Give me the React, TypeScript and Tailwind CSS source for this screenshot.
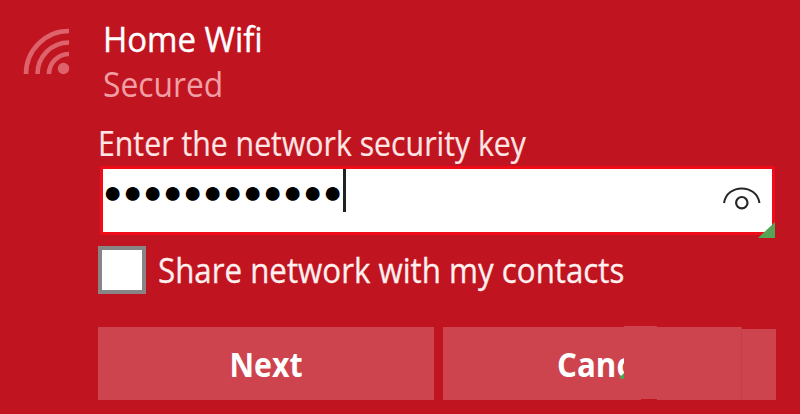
import React from "react";

const WifiIcon = () => (
  <svg width="48" height="50" viewBox="0 0 48 50" fill="none" stroke="#de626b" strokeWidth="4.6">
    <path d="M3 49 A43 43 0 0 1 46 6" />
    <path d="M14.5 49 A31.5 31.5 0 0 1 46 17.5" />
    <path d="M26 49 A20 20 0 0 1 46 29" />
    <circle cx="40.5" cy="43.5" r="5.7" fill="#de626b" stroke="none" />
  </svg>
);

const RevealIcon = () => (
  <svg width="40" height="30" viewBox="0 0 40 30" fill="none" stroke="#262626">
    <path d="M2 19 C5 -0.5 34.5 -0.5 37.5 19" strokeWidth="2" />
    <circle cx="19.8" cy="18.7" r="5.7" strokeWidth="2.2" />
  </svg>
);

const App = () => {
  return (
    <div className="w-[800px] h-[414px] overflow-hidden bg-[#c11421] pl-[98px] pr-6 font-['Open_Sans','Noto_Sans',sans-serif] text-white whitespace-nowrap">
      <div className="flex h-[122px] -ml-[75px] pt-4">
        <div className="w-[80px] pt-[9px]">
          <WifiIcon />
        </div>
        <div>
          <p className="text-[35px] leading-[45px] origin-left scale-x-[0.94] [-webkit-text-stroke:0.4px]">Home Wifi</p>
          <p className="text-[34px] leading-[46px] origin-left scale-x-[0.935] text-[#f0a0a5]">Secured</p>
        </div>
      </div>

      <label className="block h-[44px] w-fit text-[34px] leading-[43px] origin-left scale-x-[0.89] text-[#ffe6e4] [-webkit-text-stroke:0.2px]">
        Enter the network security key
      </label>
      <div className="relative ml-[2px] w-[675px] h-[69px] flex items-start justify-between border-3 border-[#f00b19] bg-white text-black">
        <div className="flex">
          <span className="w-[240px] text-[32px] leading-[46px] tracking-[0.67px] font-['Liberation_Sans',sans-serif]">
            {"●".repeat(12)}
          </span>
          <span className="w-[3px] h-[43px] bg-[#222]" />
        </div>
        <div className="pt-[15px] pr-[10px]">
          <RevealIcon />
        </div>
        <svg className="absolute -right-[3px] -bottom-[6px]" width="17" height="16" viewBox="0 0 17 16">
          <path d="M0 16 L17 0 V16 Z" fill="#56a456" />
        </svg>
      </div>

      <div className="mt-[11px] flex items-center gap-[12px]">
        <span className="size-[48px] border-4 border-[#878585] bg-white" />
        <span className="text-[34px] leading-[48px] origin-left scale-x-[0.92] text-[#fff0ef] [-webkit-text-stroke:0.3px]">
          Share network with my contacts
        </span>
      </div>

      <div className="mt-[33px] flex gap-[9px] text-[34px] leading-[75px] font-bold">
        <button className="w-[336px] h-[73px] bg-[#cd444e]">
          <span className="block scale-x-[0.89]">Next</span>
        </button>
        <button className="relative w-[333px] h-[73px] bg-[#cd444e] text-left">
          <span className="block w-[181px] h-[73px] pl-[114px] overflow-hidden">
            <span className="block origin-left scale-x-[0.92]">Canc</span>
          </span>
          <svg className="absolute left-[176px] top-[46px]" width="5" height="7" viewBox="0 0 5 7">
            <path d="M0 5 L5 0 V6 Z" fill="#3fae50" />
          </svg>
          <span className="absolute left-[181px] -top-px w-[33px] h-px bg-[#cd444e]" />
          <span className="absolute left-[198px] bottom-0 w-[16px] h-px bg-[#c11421]" />
          <span className="absolute right-0 top-0 w-[34px] h-[2px] bg-[#c11421]" />
          <span className="absolute right-[34px] top-0 w-px h-full bg-[#c73c47]" />
        </button>
      </div>
    </div>
  );
};

export default App;
